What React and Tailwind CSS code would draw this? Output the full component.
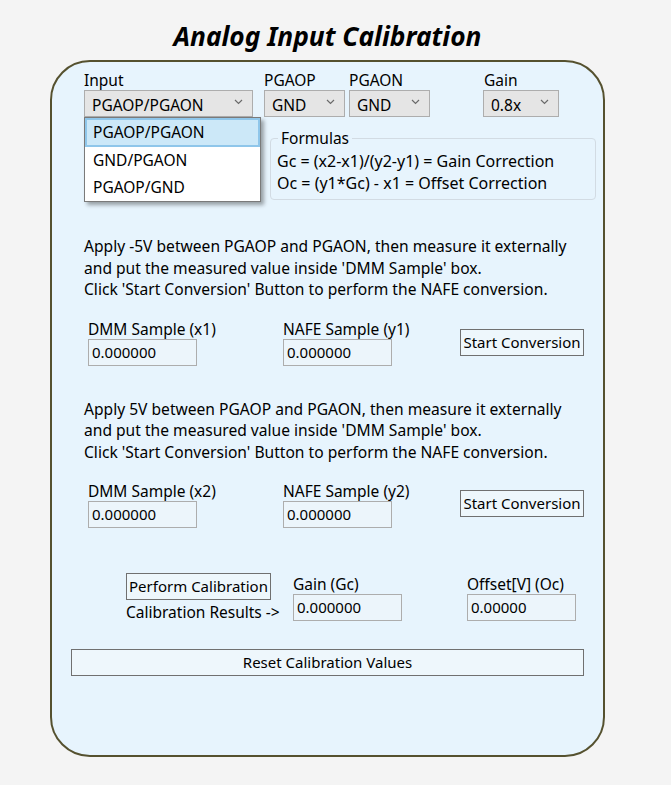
import React from "react";

const FONT = { fontFamily: '"Noto Sans", "Open Sans", sans-serif' };

function Chevron() {
  return (
    <svg width="9" height="6" viewBox="0 0 9 6" className="shrink-0">
      <path d="M1 1 L4.5 4.5 L8 1" fill="none" stroke="#6a6a6a" strokeWidth="1.2" />
    </svg>
  );
}

function Select({ value, w }) {
  return (
    <div
      className={`flex h-[27px] items-center justify-between border border-[#adadad] bg-[#e5e5e5] pl-[7px] pr-[9px] text-[15.5px] text-black ${w}`}
    >
      <span className="pt-[4px]">{value}</span>
      <span className="-mt-[4px]">
        <Chevron />
      </span>
    </div>
  );
}

function Field({ label, value }) {
  return (
    <div className="flex w-[109px] flex-col">
      <div className="h-[19px] whitespace-nowrap text-[15.5px] leading-[19px] text-black">{label}</div>
      <div className="flex h-[27px] items-center border border-[#adadad] bg-[#ecf5fb] pl-[3px] text-[15px] text-black">
        {value}
      </div>
    </div>
  );
}

function Btn({ children, className }) {
  return (
    <div
      className={`flex h-[27px] items-center justify-center border-[1.5px] border-[#707070] bg-[#eef7fc] text-[15px] text-black whitespace-nowrap ${className}`}
    >
      {children}
    </div>
  );
}

export default function App() {
  return (
    <div className="min-h-[785px] w-[671px] bg-[#f4f4f4]" style={FONT}>
      <div className="flex h-[60px] w-[655px] items-start justify-center pt-[19px]">
        <h1 className="text-[26.3px] font-bold italic leading-[34px] text-black">Analog Input Calibration</h1>
      </div>
      <div className="relative ml-[50px] h-[697px] w-[555px] rounded-[40px] border-2 border-[#55512f] bg-[#e7f4fd]">
        {/* Row 1: selects */}
        <div className="flex pl-[32px] pt-[9px]">
          <div className="flex flex-col">
            <div className="h-[19px] text-[15.5px] leading-[19px]">Input</div>
            <Select value="PGAOP/PGAON" w="w-[169px]" />
          </div>
          <div className="ml-[11px] flex flex-col">
            <div className="h-[19px] text-[15.5px] leading-[19px]">PGAOP</div>
            <Select value="GND" w="w-[81px]" />
          </div>
          <div className="ml-[4px] flex flex-col">
            <div className="h-[19px] text-[15.5px] leading-[19px]">PGAON</div>
            <Select value="GND" w="w-[81px]" />
          </div>
          <div className="ml-[53px] flex flex-col">
            <div className="h-[19px] pl-[1px] text-[15.5px] leading-[19px]">Gain</div>
            <Select value="0.8x" w="w-[76px]" />
          </div>
        </div>

        {/* Formulas fieldset */}
        <div className="relative ml-[218px] mt-[21px] h-[62px] w-[326px] rounded-[4px] border border-[#d2dbe3] pl-[6px] pt-[11px] text-[16px] leading-[22px]">
          <div className="absolute -top-[11px] left-[7px] bg-[#e7f4fd] px-[3px] text-[15.5px] leading-[20px]">Formulas</div>
          <div className="whitespace-nowrap">Gc = (x2-x1)/(y2-y1) = Gain Correction</div>
          <div className="whitespace-nowrap">Oc = (y1*Gc) - x1 = Offset Correction</div>
        </div>

        {/* Paragraph 1 */}
        <div className="ml-[32px] mt-[36px] whitespace-nowrap text-[15.6px] leading-[21.5px]">
          <div>Apply -5V between PGAOP and PGAON, then measure it externally</div>
          <div>and put the measured value inside 'DMM Sample' box.</div>
          <div>Click 'Start Conversion' Button to perform the NAFE conversion.</div>
        </div>

        <div className="ml-[36px] mt-[19px] flex items-start">
          <Field label="DMM Sample (x1)" value="0.000000" />
          <div className="ml-[86px]">
            <Field label="NAFE Sample (y1)" value="0.000000" />
          </div>
          <Btn className="ml-[68px] mt-[9px] w-[124px]">Start Conversion</Btn>
        </div>

        {/* Paragraph 2 */}
        <div className="ml-[32px] mt-[33px] whitespace-nowrap text-[15.6px] leading-[21.5px]">
          <div>Apply 5V between PGAOP and PGAON, then measure it externally</div>
          <div>and put the measured value inside 'DMM Sample' box.</div>
          <div>Click 'Start Conversion' Button to perform the NAFE conversion.</div>
        </div>

        <div className="ml-[36px] mt-[19px] flex items-start">
          <Field label="DMM Sample (x2)" value="0.000000" />
          <div className="ml-[86px]">
            <Field label="NAFE Sample (y2)" value="0.000000" />
          </div>
          <Btn className="ml-[68px] mt-[8px] w-[124px]">Start Conversion</Btn>
        </div>

        {/* Calibration */}
        <div className="ml-[74px] mt-[45px] flex items-start">
          <div className="flex w-[167px] flex-col">
            <Btn className="w-[145px]">Perform Calibration</Btn>
            <div className="mt-[3px] whitespace-nowrap text-[15.5px] leading-[19px]">Calibration Results -&gt;</div>
          </div>
          <div className="mt-[2px]">
            <Field label="Gain (Gc)" value="0.000000" />
          </div>
          <div className="ml-[65px] mt-[2px]">
            <Field label="Offset[V] (Oc)" value="0.00000" />
          </div>
        </div>

        <Btn className="ml-[19px] mt-[27px] w-[513px]">Reset Calibration Values</Btn>

        {/* Dropdown list overlay */}
        <div className="absolute left-[32px] top-[55px] w-[177px] border border-[#7a7a7a] bg-white shadow-[3px_3px_4px_rgba(0,0,0,0.35)] text-[15.5px]">
          <div className="flex h-[29px] items-center border-2 border-[#8fc6ea] bg-[#cce8f8] pl-[6px]">PGAOP/PGAON</div>
          <div className="flex h-[27px] items-center pl-[8px]">GND/PGAON</div>
          <div className="flex h-[27px] items-center pl-[8px]">PGAOP/GND</div>
        </div>
      </div>
    </div>
  );
}
